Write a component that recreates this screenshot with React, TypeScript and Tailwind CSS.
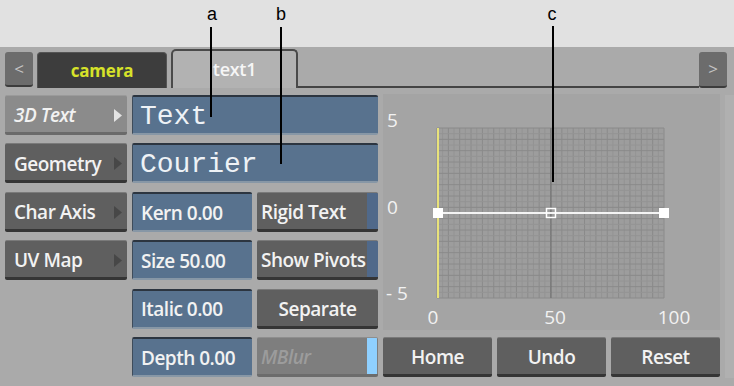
import React from "react";

const font = { fontFamily: '"Open Sans", "DejaVu Sans", sans-serif' };

function Arrow({ light }: { light?: boolean }) {
  return (
    <svg width="8" height="13" viewBox="0 0 8 13" className="shrink-0">
      <polygon points="0,0 8,6.5 0,13" fill={light ? "#e4e4e4" : "#474747"} />
    </svg>
  );
}

function SideButton({ label, active }: { label: string; active?: boolean }) {
  return (
    <div
      className={
        "h-[40px] flex items-center justify-between pl-[9px] pr-[5px] pt-[3px] rounded-[2px] border-t border-b-[3px] " +
        (active
          ? "bg-[#8b8b8b] border-t-[#9a9a9a] border-b-[#6a6a6a]"
          : "bg-[#5f5f5f] border-t-[#7a7a7a] border-b-[#353535]")
      }
    >
      <span
        className={
          "text-[19px] font-semibold tracking-[-0.5px] text-[#f2f2f2] " + (active ? "italic" : "")
        }
      >
        {label}
      </span>
      <Arrow light={active} />
    </div>
  );
}

function Field({ label, className = "" }: { label: string; className?: string }) {
  return (
    <div
      className={
        "h-[40px] flex items-center pl-[8px] pt-[2px] bg-[#58728e] border-t-2 border-t-[#2c3540] border-b-2 border-b-[#8797a6] border-l border-l-[#3e4c5b] rounded-[2px] " +
        className
      }
    >
      <span className="text-[19px] font-semibold tracking-[-0.5px] text-[#f2f2f2] whitespace-nowrap">{label}</span>
    </div>
  );
}

function MonoField({ label }: { label: string }) {
  return (
    <div className="h-[40px] flex items-center pl-[7px] pt-[3px] bg-[#58728e] border-t-2 border-t-[#2c3540] border-b-2 border-b-[#8797a6] border-l border-l-[#3e4c5b] rounded-[2px]">
      <span
        className="text-[28px] text-[#eef2f6] leading-none"
        style={{ fontFamily: '"Liberation Mono", "Courier New", monospace' }}
      >
        {label}
      </span>
    </div>
  );
}

function DarkButton({
  label,
  align = "left",
  strip,
  dim,
}: {
  label: string;
  align?: "left" | "center";
  strip?: "blue" | "light";
  dim?: boolean;
}) {
  return (
    <div
      className={
        "h-[40px] flex items-stretch rounded-[2px] border-t border-b-[3px] overflow-hidden " +
        (dim
          ? "bg-[#7e7e7e] border-t-[#8e8e8e] border-b-[#6c6c6c]"
          : "bg-[#5f5f5f] border-t-[#7a7a7a] border-b-[#353535]")
      }
    >
      <div
        className={
          "flex-1 flex items-center pt-[3px] " + (align === "center" ? "justify-center" : "pl-[4px]")
        }
      >
        <span
          className={
            "text-[19px] font-semibold tracking-[-0.5px] whitespace-nowrap " +
            (dim ? "italic text-[#9c9c9c]" : "text-[#f2f2f2]")
          }
        >
          {label}
        </span>
      </div>
      {strip === "blue" && <div className="w-[11px] bg-[#50698a]" />}
      {strip === "light" && <div className="w-[10px] bg-[#8fd0ff] mr-[1px]" />}
    </div>
  );
}

function Graph() {
  const gx0 = 54;
  const gx1 = 281;
  const gy0 = 34;
  const gy1 = 204;
  const cols = 40;
  const rows = 30;
  const lines: React.ReactNode[] = [];
  for (let i = 0; i <= cols; i++) {
    const x = gx0 + ((gx1 - gx0) * i) / cols;
    lines.push(
      <line
        key={"v" + i}
        x1={x}
        x2={x}
        y1={gy0}
        y2={gy1}
        stroke={i % 2 === 0 ? "#8a8a8a" : "#949494"}
        strokeWidth={1}
      />
    );
  }
  for (let j = 0; j <= rows; j++) {
    const y = gy0 + ((gy1 - gy0) * j) / rows;
    lines.push(
      <line
        key={"h" + j}
        x1={gx0}
        x2={gx1}
        y1={y}
        y2={y}
        stroke={j % 2 === 0 ? "#8a8a8a" : "#949494"}
        strokeWidth={1}
      />
    );
  }
  const labelStyle = { fontFamily: '"Open Sans", "DejaVu Sans", sans-serif' };
  return (
    <svg width="337" height="236" viewBox="0 0 337 236" className="overflow-visible">
      <rect x={gx0} y={gy0} width={gx1 - gx0} height={gy1 - gy0} fill="#9d9d9d" />
      {lines}
      <line x1={168} x2={168} y1={gy0} y2={gy1} stroke="#6e6e6e" strokeWidth={1} />
      <line x1={55} x2={55} y1={gy0} y2={gy1} stroke="#e8e27a" strokeWidth={2} />
      <line x1={55} x2={281} y1={119} y2={119} stroke="#f4f4f4" strokeWidth={2} />
      <rect x={50} y={114} width={10} height={10} fill="#ffffff" />
      <rect x={276} y={114} width={10} height={10} fill="#ffffff" />
      <rect x={163.5} y={114.5} width={9} height={9} fill="none" stroke="#ffffff" strokeWidth={1.5} />
      <g fill="#f2f2f2" fontSize="19" style={labelStyle}>
        <text x={4} y={33}>5</text>
        <text x={4} y={120}>0</text>
        <text x={3} y={206}>- 5</text>
        <text x={50} y={230} textAnchor="middle">0</text>
        <text x={172} y={230} textAnchor="middle">50</text>
        <text x={291} y={230} textAnchor="middle">100</text>
      </g>
    </svg>
  );
}

export default function App() {
  return (
    <div className="relative w-[734px] h-[386px] overflow-hidden bg-[#aaaaaa]" style={font}>
      {/* top annotation band */}
      <div className="h-[47px] bg-[#e1e1e1]" />

      {/* tab row */}
      <div className="h-[41px] flex items-end pl-[5px] pr-[7px]">
        <div className="w-[28px] h-[35px] mb-[1px] rounded-[3px] bg-[#6c6c6c] border-b-2 border-b-[#3c3c3c] flex items-center justify-center text-[#c4c4c4] text-[17px]">
          &lt;
        </div>
        <div className="ml-[4px] w-[130px] h-[36px] rounded-t-[4px] bg-[#3d3d3d] border-t border-x border-[#555] flex items-center justify-center">
          <span className="text-[#d6e22a] text-[17px] font-bold tracking-[-0.2px]">camera</span>
        </div>
        <div className="ml-[4px] w-[127px] h-[39px] rounded-t-[5px] bg-[#b2b2b2] border-t-2 border-x-2 border-[#4a4a4a] flex items-center justify-center">
          <span className="text-[#f6f6f6] text-[18px] font-semibold tracking-[-0.3px]">text1</span>
        </div>
        <div className="flex-1 self-stretch border-b-2 border-b-[#444]" />
        <div className="w-[28px] h-[36px] rounded-[3px] bg-[#6c6c6c] border-b-2 border-b-[#3c3c3c] flex items-center justify-center text-[#c4c4c4] text-[17px]">
          &gt;
        </div>
      </div>

      {/* main content */}
      <div className="flex pt-[7px] pl-[5px] gap-[5px]">
        <div className="w-[122px] flex flex-col gap-[8.4px]">
          <SideButton label="3D Text" active />
          <SideButton label="Geometry" />
          <SideButton label="Char Axis" />
          <SideButton label="UV Map" />
        </div>

        <div className="w-[246px] flex flex-col gap-[8.4px]">
          <MonoField label="Text" />
          <MonoField label="Courier" />
          <div className="flex gap-[5px]">
            <Field label="Kern 0.00" className="w-[120px]" />
            <div className="w-[121px]">
              <DarkButton label="Rigid Text" strip="blue" />
            </div>
          </div>
          <div className="flex gap-[5px]">
            <Field label="Size 50.00" className="w-[120px]" />
            <div className="w-[121px]">
              <DarkButton label="Show Pivots" strip="blue" />
            </div>
          </div>
          <div className="flex gap-[5px]">
            <Field label="Italic 0.00" className="w-[120px]" />
            <div className="w-[121px]">
              <DarkButton label="Separate" align="center" />
            </div>
          </div>
          <div className="flex gap-[5px]">
            <Field label="Depth 0.00" className="w-[120px]" />
            <div className="w-[121px]">
              <DarkButton label="MBlur" strip="light" dim />
            </div>
          </div>
        </div>

        <div className="w-[337px] flex flex-col -mt-[1px]">
          <div className="h-[236px] bg-[#a4a4a4]">
            <Graph />
          </div>
          <div className="mt-[7px] flex gap-[5px]">
            <div className="w-[109px]">
              <DarkButton label="Home" align="center" />
            </div>
            <div className="w-[109px]">
              <DarkButton label="Undo" align="center" />
            </div>
            <div className="w-[109px]">
              <DarkButton label="Reset" align="center" />
            </div>
          </div>
        </div>
        <div className="flex-1 bg-[#b0b0b0] h-[283px]" />
      </div>

      {/* annotation callouts (overlay) */}
      <div className="absolute left-[204px] top-[1px] w-[16px] text-center text-[18px] text-black" style={{ fontFamily: '"Liberation Sans", Arial, sans-serif' }}>
        a
      </div>
      <div className="absolute left-[210px] top-[27px] w-[2px] h-[90px] bg-black" />
      <div className="absolute left-[273px] top-[1px] w-[16px] text-center text-[18px] text-black" style={{ fontFamily: '"Liberation Sans", Arial, sans-serif' }}>
        b
      </div>
      <div className="absolute left-[280px] top-[27px] w-[2px] h-[137px] bg-black" />
      <div className="absolute left-[544px] top-[1px] w-[16px] text-center text-[18px] text-black" style={{ fontFamily: '"Liberation Sans", Arial, sans-serif' }}>
        c
      </div>
      <div className="absolute left-[552px] top-[26px] w-[2px] h-[156px] bg-black" />
    </div>
  );
}
